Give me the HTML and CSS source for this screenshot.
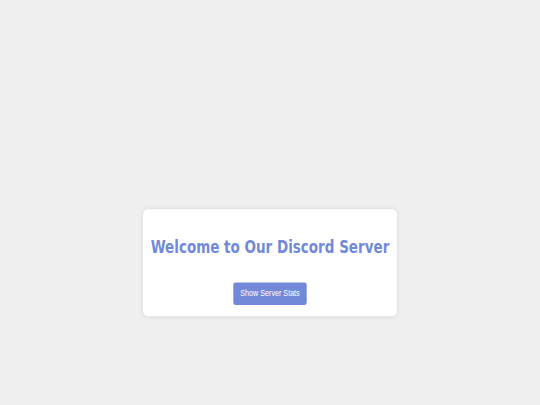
FILE: index.html
```html
<!DOCTYPE html>
<html lang="en">
<head>
<meta charset="utf-8">
<title>Discord Server</title>
<link rel="stylesheet" href="styles.css">
</head>
<body>
<div class="frame">
  <div class="viewport">
    <main class="page">
      <section class="card">
        <h1 class="title">Welcome to Our Discord Server</h1>
        <button class="stats-btn" type="button">Show Server Stats</button>
      </section>
    </main>
  </div>
</div>
</body>
</html>
```
FILE: styles.css
```css
html, body {
  margin: 0;
  padding: 0;
  background: #f0f0f0;
}

.frame {
  width: 540px;
  height: 405px;
  overflow: hidden;
}

.viewport {
  width: 1280px;
  height: 720px;
  transform: scale(0.421875, 0.5625);
  transform-origin: 0 0;
}

.page {
  box-sizing: border-box;
  height: 720px;
  padding-top: 372px;
  display: flex;
  flex-direction: column;
  align-items: center;
  background: #f0f0f0;
}

.card {
  box-sizing: border-box;
  width: 602px;
  padding: 20px;
  background: #ffffff;
  border-radius: 10px;
  box-shadow: 0 0 10px rgba(0, 0, 0, 0.1);
  display: flex;
  flex-direction: column;
  align-items: center;
}

.title {
  margin: 29px 0 44px;
  font-family: "DejaVu Sans", sans-serif;
  font-weight: bold;
  font-size: 32px;
  line-height: 37px;
  color: #7289da;
  text-align: center;
  white-space: nowrap;
}

.stats-btn {
  font-family: "Liberation Sans", Arial, sans-serif;
  font-size: 17px;
  line-height: 20px;
  padding: 10px 17px;
  border: none;
  border-radius: 5px;
  background: #7289da;
  color: #ffffff;
  cursor: pointer;
}
```
